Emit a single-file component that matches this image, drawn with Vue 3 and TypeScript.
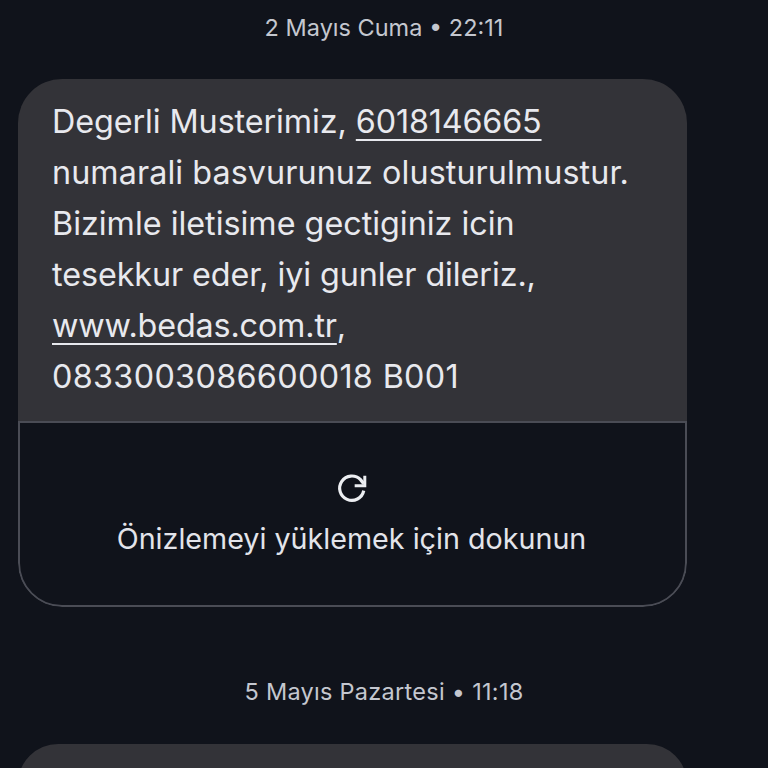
<script setup lang="ts">
const lines: { text: string; link?: string; after?: string; cls?: string }[] = [
  { text: 'Degerli Musterimiz, ', link: '6018146665', cls: 'tight' },
  { text: 'numarali basvurunuz olusturulmustur.', cls: 'loose' },
  { text: 'Bizimle iletisime gectiginiz icin' },
  { text: 'tesekkur eder, iyi gunler dileriz.,', cls: 'tight' },
  { text: '', link: 'www.bedas.com.tr', after: ',' },
  { text: '0833003086600018 B001', cls: 'digits' },
]
</script>

<template>
  <main class="page">
    <div class="stamp first">2 Mayıs Cuma • 22:11</div>
    <article class="bubble">
      <div class="body">
        <div v-for="(l, i) in lines" :key="i" class="line" :class="l.cls">{{ l.text }}<span v-if="l.link" class="link">{{ l.link }}</span>{{ l.after }}</div>
      </div>
      <div class="preview">
        <svg class="icon" viewBox="0 0 30 30" width="32" height="32" fill="none" stroke="#eceef2" stroke-width="3">
          <path d="M26 17.5A11.4 11.4 0 1 1 23 7.2L26 11" />
          <path d="M27 3.5V13H17.5" stroke-width="2.8" />
        </svg>
        <div class="label">Önizlemeyi yüklemek için dokunun</div>
      </div>
    </article>
    <div class="stamp second">5 Mayıs Pazartesi • 11:18</div>
    <div class="bubble next"></div>
  </main>
</template>

<style scoped>
.page {
  height: 768px;
  overflow: hidden;
  background: #10131b;
  font-family: Inter, Roboto, sans-serif;
  color: #e8e9ee;
}
.stamp {
  height: 32px;
  line-height: 32px;
  text-align: center;
  font-size: 23.5px;
  color: #c4c7cf;
}
.first { margin-top: 12px; }
.second { margin-top: 69px; letter-spacing: 0.28px; }
.bubble {
  width: 669px;
  margin: 35px 0 0 18px;
  border-radius: 44px;
  overflow: hidden;
  box-sizing: border-box;
}
.body {
  background: #333338;
  padding: 17px 30px 18px 34px;
  height: 342px;
  box-sizing: border-box;
}
.line {
  height: 51px;
  line-height: 51px;
  font-size: 32.3px;
  white-space: nowrap;
}
.digits { letter-spacing: 0.35px; }
.tight { letter-spacing: -0.08px; }
.loose { letter-spacing: 0.08px; }
.link {
  text-decoration: underline;
  text-decoration-thickness: 2px;
  text-underline-offset: 6px;
  letter-spacing: -0.15px;
}
.preview {
  height: 186px;
  box-sizing: border-box;
  border: 2px solid #4a4c55;
  border-radius: 0 0 44px 44px;
  display: flex;
  flex-direction: column;
  align-items: center;
  padding: 49px 2px 0 0;
}
.icon { display: block; }
.label {
  margin-top: 15px;
  font-size: 28.7px;
  line-height: 40px;
  color: #e3e4ea;
}
.next {
  height: 80px;
  margin-top: 36px;
  background: #333338;
}
</style>
